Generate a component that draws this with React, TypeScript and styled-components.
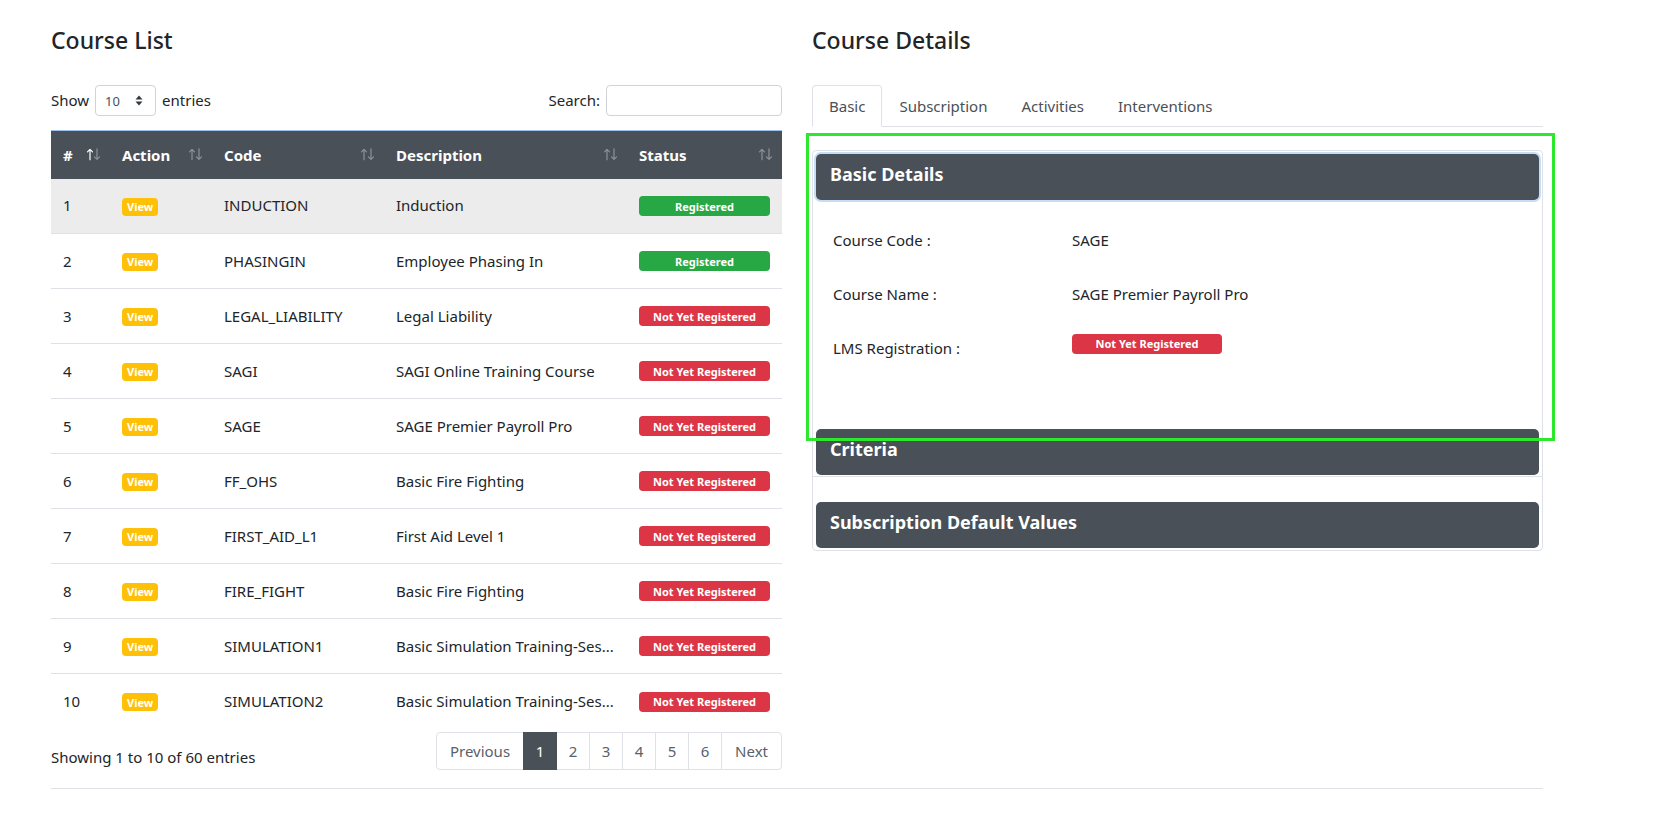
import React from "react";
import styled, { createGlobalStyle, css } from "styled-components";

const FONT = `"Noto Sans", "Open Sans", "DejaVu Sans", sans-serif`;

const GlobalStyle = createGlobalStyle`
  html, body { margin: 0; padding: 0; background: #ffffff; }
  body { font-family: ${FONT}; color: #212529; font-size: 15px; }
  * { box-sizing: border-box; }
`;

const Page = styled.div`
  position: relative;
  width: 1654px;
  height: 828px;
  padding: 24px 0 0 51px;
  overflow: hidden;
`;

const Columns = styled.div`
  display: grid;
  grid-template-columns: 731px 731px;
  column-gap: 30px;
`;

const Column = styled.section`
  display: flex;
  flex-direction: column;
  min-width: 0;
`;

const Title = styled.h4`
  margin: 0;
  height: 32px;
  font-size: 23px;
  font-weight: 500;
  line-height: 32px;
  color: #212529;
`;

/* ---------- table controls ---------- */
const Controls = styled.div`
  margin-top: 29px;
  height: 31px;
  display: flex;
  align-items: center;
  justify-content: space-between;
`;

const ControlLabel = styled.label`
  display: flex;
  align-items: center;
  gap: 6px;
  font-size: 15px;
  color: #212529;
  line-height: 22px;
  padding-bottom: 2px;
`;

const SelectBox = styled.div`
  width: 61px;
  height: 31px;
  border: 1px solid #ced4da;
  border-radius: 4px;
  display: flex;
  align-items: center;
  justify-content: space-between;
  padding: 0 12px 0 9px;
  font-size: 13px;
  color: #495057;
  margin-top: 2px;
`;

const SearchInput = styled.div`
  width: 176px;
  height: 31px;
  border: 1px solid #ced4da;
  border-radius: 4px;
  background: #fff;
  margin-top: 2px;
`;

/* ---------- table ---------- */
const Table = styled.table`
  margin-top: 14px;
  width: 731px;
  border-collapse: collapse;
  table-layout: fixed;
`;

const HeadRow = styled.tr`
  background: #495057;
  border-top: 1px solid #9fc2ea;
  height: 48px;
`;

const Th = styled.th`
  position: relative;
  padding: 0 12px;
  text-align: left;
  font-size: 15px;
  font-weight: 700;
  color: #ffffff;
  white-space: nowrap;
`;

const SortIcon = styled.svg`
  position: absolute;
  right: 9px;
  top: 50%;
  transform: translateY(-55%);
`;

const BodyRow = styled.tr<{ $highlight?: boolean }>`
  height: 55px;
  border-top: 1px solid #dee2e6;
  &:first-child { border-top: none; }
  background: ${(p) => (p.$highlight ? "#ececec" : "#ffffff")};
`;

const Td = styled.td`
  padding: 0 12px 1px;
  font-size: 15px;
  color: #212529;
  white-space: nowrap;
  overflow: hidden;
  vertical-align: middle;
`;

const Badge = styled.span<{ $tone: "warning" | "success" | "danger"; $width?: number }>`
  display: inline-flex;
  align-items: center;
  justify-content: center;
  height: ${(p) => (p.$tone === "warning" ? 18 : 20)}px;
  width: ${(p) => (p.$width ? `${p.$width}px` : "auto")};
  padding: ${(p) => (p.$width ? "0" : "0 5px")};
  border-radius: 4px;
  font-size: 11px;
  font-weight: 700;
  color: #ffffff;
  line-height: 1;
  ${(p) =>
    p.$tone === "warning"
      ? css`background: #ffc107;`
      : p.$tone === "success"
      ? css`background: #28a745;`
      : css`background: #dc3545;`}
`;

/* ---------- footer ---------- */
const TableFooter = styled.div`
  margin-top: 3px;
  display: flex;
  justify-content: space-between;
  align-items: flex-start;
`;

const Info = styled.div`
  padding-top: 14px;
  font-size: 15px;
  line-height: 22px;
  color: #212529;
`;

const Pagination = styled.ul`
  margin: 0;
  padding: 0;
  list-style: none;
  display: flex;
  height: 38px;
`;

const PageItem = styled.li<{ $active?: boolean; $wide?: boolean }>`
  height: 38px;
  min-width: ${(p) => (p.$wide ? "auto" : "34px")};
  padding: ${(p) => (p.$wide ? "0 13px" : "0")};
  margin-left: -1px;
  display: flex;
  align-items: center;
  justify-content: center;
  border: 1px solid #dee2e6;
  font-size: 15px;
  color: ${(p) => (p.$active ? "#ffffff" : "#5a6169")};
  background: ${(p) => (p.$active ? "#495057" : "#ffffff")};
  border-color: ${(p) => (p.$active ? "#495057" : "#dee2e6")};
  position: relative;
  z-index: ${(p) => (p.$active ? 1 : 0)};
  &:first-child { margin-left: 0; border-radius: 4px 0 0 4px; }
  &:last-child { border-radius: 0 4px 4px 0; }
`;

const Rule = styled.hr`
  margin: 18px 0 0 0;
  width: 1492px;
  border: none;
  border-top: 1px solid #dee2e6;
`;

/* ---------- right panel ---------- */
const Tabs = styled.nav`
  margin-top: 29px;
  display: flex;
  border-bottom: 1px solid #dee2e6;
  height: 42px;
`;

const Tab = styled.div<{ $active?: boolean }>`
  height: 42px;
  padding: 0 16px 1px;
  display: flex;
  align-items: center;
  font-size: 15px;
  color: #495057;
  border: 1px solid ${(p) => (p.$active ? "#dee2e6" : "transparent")};
  border-bottom-color: ${(p) => (p.$active ? "#ffffff" : "transparent")};
  border-radius: 4px 4px 0 0;
  background: ${(p) => (p.$active ? "#ffffff" : "transparent")};
  margin-bottom: -1px;
`;

const Accordion = styled.div`
  margin-top: 23px;
  border: 1px solid #dee2e6;
  border-radius: 4px;
  padding: 3px 3px 2px;
  display: flex;
  flex-direction: column;
`;

const SectionHeader = styled.div<{ $focused?: boolean }>`
  height: 46px;
  border-radius: 5px;
  background: #495057;
  color: #ffffff;
  font-size: 18px;
  font-weight: 700;
  display: flex;
  align-items: center;
  padding: 0 0 6px 14px;
  ${(p) =>
    p.$focused &&
    css`
      box-shadow: 0 0 0 2px #c6ddf6;
    `}
`;

const SectionBody = styled.div`
  padding: 14px 17px 53px;
  display: flex;
  flex-direction: column;
`;

const DetailRow = styled.div`
  height: 54px;
  display: grid;
  grid-template-columns: 239px 1fr;
  align-items: center;
  font-size: 15px;
  color: #212529;
  padding-bottom: 2px;
`;

const DetailValue = styled.div<{ $top?: boolean }>`
  ${(p) =>
    p.$top &&
    css`
      align-self: start;
      padding-top: 10px;
    `}
`;

const Divider = styled.div`
  height: 1px;
  background: #dee2e6;
  margin: 1px -3px 25px;
`;

const Highlight = styled.div`
  position: absolute;
  left: 806px;
  top: 133px;
  width: 749px;
  height: 308px;
  border: 3px solid #2ee82e;
  pointer-events: none;
`;

/* ---------- icons ---------- */
const SortArrows = ({ active }: { active?: boolean }) => (
  <SortIcon width="15" height="13" viewBox="0 0 15 13" fill="none">
    <g stroke={active ? "#ffffff" : "rgba(255,255,255,0.38)"} strokeWidth="1.2" strokeLinecap="round" strokeLinejoin="round">
      <path d="M4 12V1.5M1.5 4L4 1.5L6.5 4" />
    </g>
    <g stroke="rgba(255,255,255,0.38)" strokeWidth="1.2" strokeLinecap="round" strokeLinejoin="round">
      <path d="M11 1V11.5M8.5 9L11 11.5L13.5 9" />
    </g>
  </SortIcon>
);

const SelectArrows = () => (
  <svg width="8" height="11" viewBox="0 0 8 11">
    <path d="M4 0.5L7.5 4.5H0.5Z M4 10.5L7.5 6.5H0.5Z" fill="#343a40" />
  </svg>
);

type Course = { code: string; desc: string; registered: boolean };

const courses: Course[] = [
  { code: "INDUCTION", desc: "Induction", registered: true },
  { code: "PHASINGIN", desc: "Employee Phasing In", registered: true },
  { code: "LEGAL_LIABILITY", desc: "Legal Liability", registered: false },
  { code: "SAGI", desc: "SAGI Online Training Course", registered: false },
  { code: "SAGE", desc: "SAGE Premier Payroll Pro", registered: false },
  { code: "FF_OHS", desc: "Basic Fire Fighting", registered: false },
  { code: "FIRST_AID_L1", desc: "First Aid Level 1", registered: false },
  { code: "FIRE_FIGHT", desc: "Basic Fire Fighting", registered: false },
  { code: "SIMULATION1", desc: "Basic Simulation Training-Ses...", registered: false },
  { code: "SIMULATION2", desc: "Basic Simulation Training-Ses...", registered: false },
];

const headers = ["#", "Action", "Code", "Description", "Status"];
const widths = [59, 102, 172, 243, 155];

export default function App() {
  return (
    <Page>
      <GlobalStyle />
      <Columns>
        <Column>
          <Title>Course List</Title>
          <Controls>
            <ControlLabel>
              Show
              <SelectBox>
                <span>10</span>
                <SelectArrows />
              </SelectBox>
              entries
            </ControlLabel>
            <ControlLabel>
              Search:
              <SearchInput />
            </ControlLabel>
          </Controls>
          <Table>
            <colgroup>
              {widths.map((w, i) => (
                <col key={i} style={{ width: w }} />
              ))}
            </colgroup>
            <thead>
              <HeadRow>
                {headers.map((h, i) => (
                  <Th key={h}>
                    {h}
                    <SortArrows active={i === 0} />
                  </Th>
                ))}
              </HeadRow>
            </thead>
            <tbody>
              {courses.map((c, i) => (
                <BodyRow key={c.code} $highlight={i === 0}>
                  <Td>{i + 1}</Td>
                  <Td>
                    <Badge $tone="warning">View</Badge>
                  </Td>
                  <Td>{c.code}</Td>
                  <Td>{c.desc}</Td>
                  <Td>
                    <Badge $tone={c.registered ? "success" : "danger"} $width={131}>
                      {c.registered ? "Registered" : "Not Yet Registered"}
                    </Badge>
                  </Td>
                </BodyRow>
              ))}
            </tbody>
          </Table>
          <TableFooter>
            <Info>Showing 1 to 10 of 60 entries</Info>
            <Pagination>
              <PageItem $wide>Previous</PageItem>
              <PageItem $active>1</PageItem>
              <PageItem>2</PageItem>
              <PageItem>3</PageItem>
              <PageItem>4</PageItem>
              <PageItem>5</PageItem>
              <PageItem>6</PageItem>
              <PageItem $wide>Next</PageItem>
            </Pagination>
          </TableFooter>
        </Column>

        <Column>
          <Title>Course Details</Title>
          <Tabs>
            <Tab $active>Basic</Tab>
            <Tab>Subscription</Tab>
            <Tab>Activities</Tab>
            <Tab>Interventions</Tab>
          </Tabs>
          <Accordion>
            <SectionHeader $focused>Basic Details</SectionHeader>
            <SectionBody>
              <DetailRow>
                <div>Course Code :</div>
                <DetailValue>SAGE</DetailValue>
              </DetailRow>
              <DetailRow>
                <div>Course Name :</div>
                <DetailValue>SAGE Premier Payroll Pro</DetailValue>
              </DetailRow>
              <DetailRow>
                <div>LMS Registration :</div>
                <DetailValue $top>
                  <Badge $tone="danger" $width={150}>Not Yet Registered</Badge>
                </DetailValue>
              </DetailRow>
            </SectionBody>
            <SectionHeader>Criteria</SectionHeader>
            <Divider />
            <SectionHeader>Subscription Default Values</SectionHeader>
          </Accordion>
        </Column>
      </Columns>
      <Rule />
      <Highlight />
    </Page>
  );
}
